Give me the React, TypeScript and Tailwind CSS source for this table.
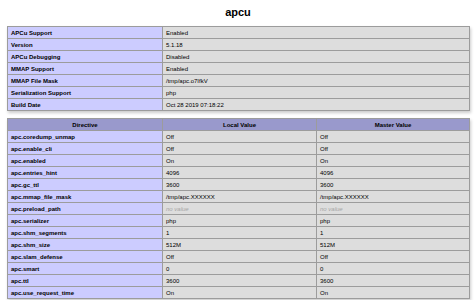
const info: [string, string][] = [
  ['APCu Support', 'Enabled'],
  ['Version', '5.1.18'],
  ['APCu Debugging', 'Disabled'],
  ['MMAP Support', 'Enabled'],
  ['MMAP File Mask', '/tmp/apc.o7IfkV'],
  ['Serialization Support', 'php'],
  ['Build Date', 'Oct 28 2019 07:18:22'],
];

const directives: [string, string][] = [
  ['apc.coredump_unmap', 'Off'],
  ['apc.enable_cli', 'Off'],
  ['apc.enabled', 'On'],
  ['apc.entries_hint', '4096'],
  ['apc.gc_ttl', '3600'],
  ['apc.mmap_file_mask', '/tmp/apc.XXXXXX'],
  ['apc.preload_path', ''],
  ['apc.serializer', 'php'],
  ['apc.shm_segments', '1'],
  ['apc.shm_size', '512M'],
  ['apc.slam_defense', 'Off'],
  ['apc.smart', '0'],
  ['apc.ttl', '3600'],
  ['apc.use_request_time', 'On'],
];

const cell = 'border border-[#9c9c9c] px-[3px] py-0 align-middle';

function Value({ v }: { v: string }) {
  if (!v) return <i className="text-[#a5a5a5]">no value</i>;
  return <>{v}</>;
}

export default function App() {
  return (
    <div
      className="w-[476px] h-[300px] bg-white text-black overflow-hidden"
      style={{ fontFamily: '"Liberation Sans", Arial, sans-serif' }}
    >
      <h2 className="h-[26px] pt-[5px] text-center text-[11px] leading-[14px] font-bold">apcu</h2>

      <table className="ml-[7px] w-[463px] border-collapse text-[6px] leading-[6px] shadow-[1px_2px_3px_#ccc]">
        <tbody>
          {info.map(([k, v]) => (
            <tr key={k} className="h-[12px]">
              <td className={`${cell} w-[155px] bg-[#ccccff] font-bold`}>{k}</td>
              <td className={`${cell} bg-[#dddddd]`}>{v}</td>
            </tr>
          ))}
        </tbody>
      </table>

      <table className="ml-[7px] mt-[7px] w-[463px] table-fixed border-collapse text-[6px] leading-[6px] shadow-[1px_2px_3px_#ccc]">
        <thead>
          <tr className="h-[12px] bg-[#9999cc]">
            <th className={`${cell} w-[155px] font-bold`}>Directive</th>
            <th className={`${cell} w-[154px] font-bold`}>Local Value</th>
            <th className={`${cell} font-bold`}>Master Value</th>
          </tr>
        </thead>
        <tbody>
          {directives.map(([k, v]) => (
            <tr key={k} className="h-[12px]">
              <td className={`${cell} bg-[#ccccff] font-bold`}>{k}</td>
              <td className={`${cell} bg-[#dddddd]`}>
                <Value v={v} />
              </td>
              <td className={`${cell} bg-[#dddddd]`}>
                <Value v={v} />
              </td>
            </tr>
          ))}
        </tbody>
      </table>
    </div>
  );
}
